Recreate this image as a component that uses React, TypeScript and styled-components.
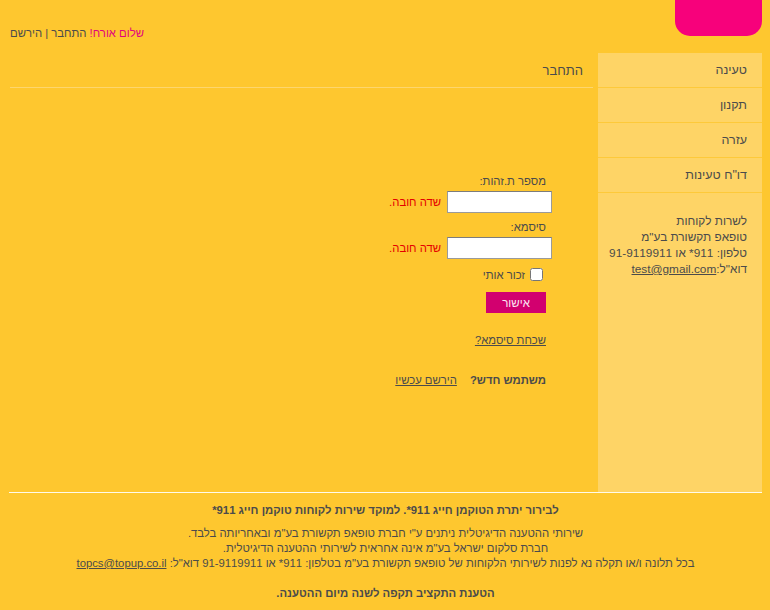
import * as React from 'react';
import styled, { createGlobalStyle } from 'styled-components';

const GlobalStyle = createGlobalStyle`
  html, body {
    margin: 0;
    padding: 0;
    background: #fec72f;
  }
  body {
    font-family: "Liberation Sans", Arial, sans-serif;
    font-size: 11.3px;
    color: #4b4b4b;
  }
`;

const Page = styled.div`
  direction: rtl;
  width: 753px;
  margin-left: 9px;
`;

const Header = styled.div`
  display: flex;
  justify-content: space-between;
  align-items: flex-start;
  height: 53px;
`;

const Tab = styled.div`
  width: 87px;
  height: 36px;
  background: #f7017b;
  border-radius: 0 0 15px 15px;
`;

const TopLinks = styled.div`
  margin-top: 26px;
  margin-left: 1px;
  line-height: 15px;
`;

const Greeting = styled.span`
  color: #e2037c;
`;

const PlainLink = styled.a`
  color: #4b4b4b;
  text-decoration: none;
`;

const Body = styled.div`
  display: flex;
  height: 439px;
`;

const Sidebar = styled.div`
  width: 164px;
  background: #fed466;
  flex-shrink: 0;
`;

const MenuItem = styled.div`
  height: 34px;
  line-height: 34px;
  padding-right: 15px;
  font-size: 12.5px;
  border-bottom: 1px solid #fdc93a;
`;

const Contact = styled.div`
  padding: 20px 15px 0 0;
  line-height: 16px;
  font-size: 11.8px;
`;

const UnderLink = styled.a`
  color: #4b4b4b;
  text-decoration: underline;
`;

const Main = styled.div`
  flex: 1;
`;

const Heading = styled.div`
  height: 34px;
  line-height: 36px;
  padding-right: 10px;
  margin: 0 5px 0 1px;
  font-size: 13px;
  border-bottom: 1px solid #fdd66e;
`;

const Form = styled.div`
  margin: 86px 46px 0 0;
  display: flex;
  flex-direction: column;
  align-items: flex-start;
`;

const Label = styled.div`
  padding-right: 6px;
  line-height: 15px;
  margin-bottom: 2px;
`;

const FieldRow = styled.div`
  display: flex;
  align-items: center;
  gap: 6px;
  margin-bottom: 7px;
`;

const Input = styled.input`
  box-sizing: border-box;
  width: 105px;
  height: 22px;
  border: 1px solid #9a9a9a;
  border-top-color: #7c7c7c;
  background: #fff;
  margin: 0;
`;

const Required = styled.span`
  color: #e50000;
`;

const RememberRow = styled.label`
  display: flex;
  align-items: center;
  gap: 5px;
  padding-right: 9px;
  margin-top: 2px;
`;

const Check = styled.input`
  width: 13px;
  height: 13px;
  margin: 0;
`;

const Submit = styled.button`
  margin: 11px 6px 0 0;
  width: 60px;
  height: 21px;
  border: none;
  background: #d2006f;
  color: #fbe7f1;
  font-family: "Liberation Sans", Arial, sans-serif;
  font-size: 11.5px;
  padding: 0;
`;

const Forgot = styled(UnderLink)`
  margin: 20px 6px 0 0;
  line-height: 15px;
`;

const NewUser = styled.div`
  margin: 25px 6px 0 0;
  display: flex;
  gap: 13px;
  line-height: 15px;
`;

const Bold = styled.b`
  font-weight: bold;
`;

const Footer = styled.div`
  border-top: 1px solid #fffbea;
  text-align: center;
  padding-top: 10px;
`;

const FooterTitle = styled.div`
  font-weight: bold;
  line-height: 15px;
  margin-bottom: 8px;
`;

const FooterLine = styled.div`
  line-height: 15px;
`;

const FooterNote = styled.div`
  font-weight: bold;
  line-height: 15px;
  margin-top: 15px;
`;

const menu = ['טעינה', 'תקנון', 'עזרה', 'דו"ח טעינות'];

export default function App() {
  return (
    <>
      <GlobalStyle />
      <Page>
        <Header>
          <Tab />
          <TopLinks>
            <Greeting>שלום אורח!</Greeting> <PlainLink href="#">התחבר</PlainLink> |{' '}
            <PlainLink href="#">הירשם</PlainLink>
          </TopLinks>
        </Header>
        <Body>
          <Sidebar>
            {menu.map((m) => (
              <MenuItem key={m}>{m}</MenuItem>
            ))}
            <Contact>
              <div>לשרות לקוחות</div>
              <div>טופאפ תקשורת בע"מ</div>
              <div>טלפון: 911* או 91-9119911</div>
              <div>
                דוא"ל:<UnderLink href="#">test@gmail.com</UnderLink>
              </div>
            </Contact>
          </Sidebar>
          <Main>
            <Heading>התחבר</Heading>
            <Form>
              <Label>מספר ת.זהות:</Label>
              <FieldRow>
                <Input type="text" />
                <Required>שדה חובה.</Required>
              </FieldRow>
              <Label>סיסמא:</Label>
              <FieldRow>
                <Input type="password" />
                <Required>שדה חובה.</Required>
              </FieldRow>
              <RememberRow>
                <Check type="checkbox" />
                זכור אותי
              </RememberRow>
              <Submit>אישור</Submit>
              <Forgot href="#">שכחת סיסמא?</Forgot>
              <NewUser>
                <Bold>משתמש חדש?</Bold>
                <UnderLink href="#">הירשם עכשיו</UnderLink>
              </NewUser>
            </Form>
          </Main>
        </Body>
        <Footer>
          <FooterTitle>לבירור יתרת הטוקמן חייג 911*. למוקד שירות לקוחות טוקמן חייג 911*</FooterTitle>
          <FooterLine>שירותי ההטענה הדיגיטלית ניתנים ע"י חברת טופאפ תקשורת בע"מ ובאחריותה בלבד.</FooterLine>
          <FooterLine>חברת סלקום ישראל בע"מ אינה אחראית לשירותי ההטענה הדיגיטלית.</FooterLine>
          <FooterLine>
            בכל תלונה ו/או תקלה נא לפנות לשירותי הלקוחות של טופאפ תקשורת בע"מ בטלפון: 911* או 91-9119911 דוא"ל:{' '}
            <UnderLink href="#">topcs@topup.co.il</UnderLink>
          </FooterLine>
          <FooterNote>הטענת התקציב תקפה לשנה מיום ההטענה.</FooterNote>
        </Footer>
      </Page>
    </>
  );
}
